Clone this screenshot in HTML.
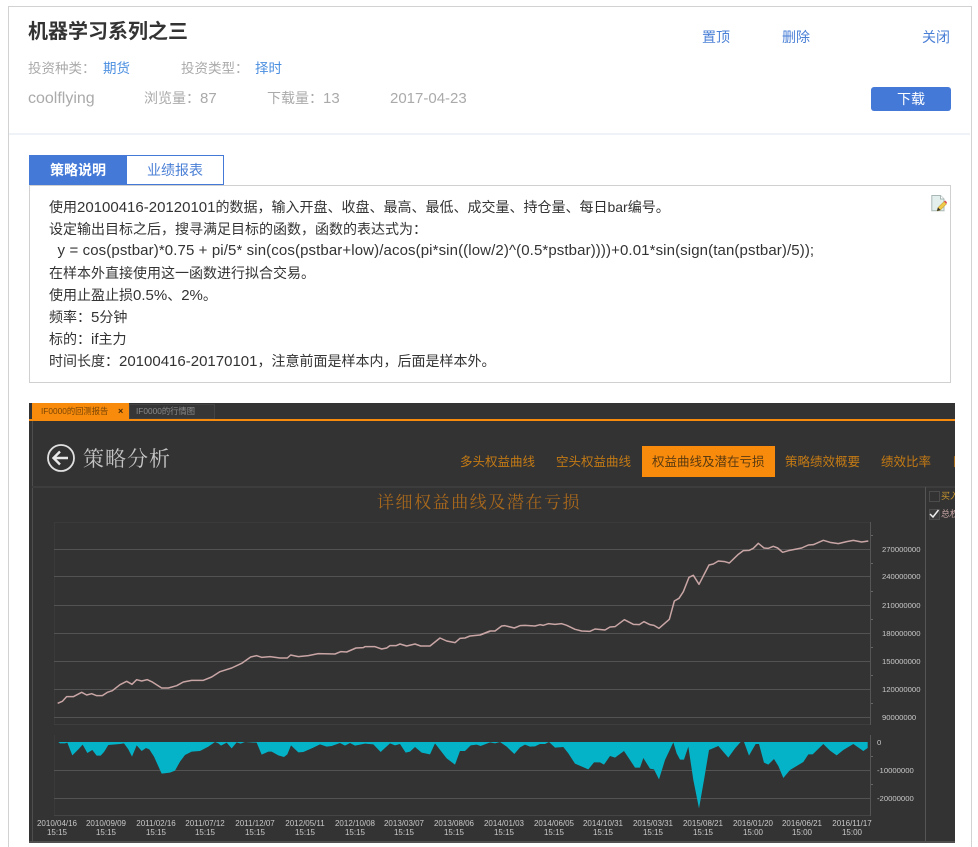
<!DOCTYPE html>
<html lang="zh"><head><meta charset="utf-8"><title>机器学习系列之三</title>
<style>
html,body{margin:0;padding:0;background:#fff;width:978px;height:847px;overflow:hidden}
#w{position:relative;width:978px;height:847px;overflow:hidden;font-family:"Liberation Sans","Noto Sans CJK SC",sans-serif}
.a{position:absolute;white-space:nowrap}
.blue{color:#4a7fd6}
.m{color:#aaa;font-size:14px;line-height:20px}
.c{position:absolute;left:49px;font-size:14px;line-height:22px;color:#333;white-space:pre}
.l{font-size:15px;line-height:0}
.p{font-family:"Noto Sans CJK TC",sans-serif;line-height:0}
#d{position:absolute;left:29px;top:403px;width:926px;height:440px;background:#333;overflow:hidden}
.ax{font-size:7.7px;color:#c8c8c8;position:absolute;white-space:nowrap;line-height:10px}
.dt{font-size:8px;color:#c8c8c8;position:absolute;width:60px;text-align:center;line-height:9px;top:819px}
.nv{font-size:12.5px;color:#c47a14;position:absolute;top:454px;line-height:16px;white-space:nowrap}
</style></head><body><div id="w">
<div class="a" style="left:8px;top:6px;width:962px;height:860px;border:1px solid #d2d2d2"></div>
<div class="a" style="left:9px;top:133px;width:961px;height:2px;background:#eff2f6"></div>

<div class="a" style="left:28px;top:18px;font-size:20px;font-weight:bold;color:#333;line-height:28px">机器学习系列之三</div>
<div class="a m" style="left:28px;top:59px;font-size:13.5px">投资种类<span class="p">：</span></div>
<div class="a" style="left:103px;top:59px;font-size:13.5px;line-height:20px;color:#4a8ee0">期货</div>
<div class="a m" style="left:181px;top:59px;font-size:13.5px">投资类型<span class="p">：</span></div>
<div class="a" style="left:255px;top:59px;font-size:13.5px;line-height:20px;color:#4a8ee0">择时</div>
<div class="a m" style="left:28px;top:89px;font-size:16px">coolflying</div>
<div class="a m" style="left:144px;top:88px">浏览量<span class="p">：</span><span class="l">87</span></div>
<div class="a m" style="left:267px;top:88px">下载量<span class="p">：</span><span class="l">13</span></div>
<div class="a m" style="left:390px;top:89px;font-size:15px">2017-04-23</div>

<div class="a blue" style="left:702px;top:27px;font-size:14px;line-height:20px">置顶</div>
<div class="a blue" style="left:782px;top:27px;font-size:14px;line-height:20px">删除</div>
<div class="a blue" style="left:922px;top:27px;font-size:14px;line-height:20px">关闭</div>
<div class="a" style="left:871px;top:87px;width:80px;height:24px;background:#4479d8;border-radius:3px;color:#fff;font-size:14px;line-height:24px;text-align:center">下载</div>

<div class="a" style="left:29px;top:155px;width:98px;height:30px;background:#4479d8;color:#fff;font-size:14px;line-height:30px;text-align:center;font-weight:bold">策略说明</div>
<div class="a" style="left:127px;top:155px;width:96px;height:28px;border:1px solid #4479d8;border-left:0;font-size:14px;line-height:29px;text-align:center;color:#4a7fd6">业绩报表</div>
<div class="a" style="left:29px;top:185px;width:920px;height:196px;border:1px solid #d0d0d0"></div>

<svg class="a" style="left:930px;top:194px" width="18" height="18" viewBox="0 0 18 18">
<path d="M1.800 1.500h8.700l3.500 3.500v11.800h-12.200z" fill="#e3efec" stroke="#a9b8b6"/>
<path d="M10.500 1.500v3.500h3.500" fill="#fff" stroke="#a9b8b6"/>
<path d="M7 17l1-3.500 6-6 2.500 2.500-6 6z" fill="#efc94c" stroke="#a88a20" stroke-width=".5"/>
<path d="M14 7.500l1.200-1 1.800 1.800-.6 1.700z" fill="#e0525a"/>
<path d="M7 17l1-3.500 2.500 2.500z" fill="#333"/>
</svg>

<div class="c" style="top:196px">使用<span class="l">20100416-20120101</span>的数据<span class="p">，</span>输入开盘<span class="p">、</span>收盘<span class="p">、</span>最高<span class="p">、</span>最低<span class="p">、</span>成交量<span class="p">、</span>持仓量<span class="p">、</span>每日<span class="l" style="font-size:14px">bar</span>编号<span class="p">。</span></div>
<div class="c" style="top:218px">设定输出目标之后<span class="p">，</span>搜寻满足目标的函数<span class="p">，</span>函数的表达式为<span class="p">：</span></div>
<div class="c" style="top:240px;font-size:15px;letter-spacing:.11px">  y = cos(pstbar)*0.75 + pi/5* sin(cos(pstbar+low)/acos(pi*sin((low/2)^(0.5*pstbar))))+0.01*sin(sign(tan(pstbar)/5));</div>
<div class="c" style="top:262px">在样本外直接使用这一函数进行拟合交易<span class="p">。</span></div>
<div class="c" style="top:284px">使用止盈止损<span class="l">0.5%</span><span class="p">、</span><span class="l">2%</span><span class="p">。</span></div>
<div class="c" style="top:306px">频率<span class="p">：</span><span class="l">5</span>分钟</div>
<div class="c" style="top:328px">标的<span class="p">：</span><span class="l">if</span>主力</div>
<div class="c" style="top:350px">时间长度<span class="p">：</span><span class="l">20100416-20170101</span><span class="p">，</span>注意前面是样本内<span class="p">，</span>后面是样本外<span class="p">。</span></div>

<div id="d"></div>
<svg class="a" style="left:29px;top:403px" width="926" height="440" viewBox="29 403 926 440">
<rect x="32" y="403" width="97" height="17" fill="#f88b0c"/>
<rect x="129.500" y="404.500" width="85" height="14.500" fill="#363636" stroke="#444"/>
<rect x="29" y="419" width="926" height="2" fill="#f88b0c"/>
<rect x="32" y="421" width="1" height="420" fill="#4e4e4e"/>
<rect x="32" y="486" width="923" height="2" fill="#3d3d3d"/>
<rect x="29" y="841" width="926" height="2" fill="#505050"/>
<rect x="925" y="487" width="1" height="354" fill="#555"/>
<rect x="54" y="522" width="816" height="1" fill="#3a3a3a"/>
<rect x="54" y="522" width="1" height="202" fill="#3a3a3a"/>
<rect x="54" y="735" width="1" height="81" fill="#3a3a3a"/>
<g fill="#535353">
<rect x="54" y="549" width="816" height="1"/><rect x="54" y="576" width="816" height="1"/><rect x="54" y="605" width="816" height="1"/><rect x="54" y="633" width="816" height="1"/><rect x="54" y="661" width="816" height="1"/><rect x="54" y="689" width="816" height="1"/><rect x="54" y="717" width="816" height="1"/>
<rect x="54" y="770" width="816" height="1"/><rect x="54" y="798" width="816" height="1"/>
</g>
<rect x="54" y="724" width="816" height="1" fill="#3e3e3e"/>
<rect x="54" y="815" width="816" height="1" fill="#454545"/>
<rect x="870" y="522" width="1" height="203" fill="#555"/>
<rect x="870" y="735" width="1" height="81" fill="#555"/>
<g fill="#666">
<rect x="871" y="535" width="2" height="1"/><rect x="871" y="563" width="2" height="1"/><rect x="871" y="591" width="2" height="1"/><rect x="871" y="619" width="2" height="1"/><rect x="871" y="647" width="2" height="1"/><rect x="871" y="675" width="2" height="1"/><rect x="871" y="703" width="2" height="1"/>
<rect x="871" y="756" width="2" height="1"/><rect x="871" y="784" width="2" height="1"/>
</g>
<g transform="translate(30 720) scale(.33333)" fill="#05b3c8">
<polygon points="85,66 90,70 105,70 112,68 127,106 145,88 158,74 172,99 187,90 200,107 212,107 222,96 235,75 270,72 282,70 295,88 306,110 320,76 335,93 348,84 358,88 372,110 395,161 420,158 435,152 450,125 465,105 485,95 510,93 535,80 555,66 565,70 573,77 590,68 605,85 620,67 632,71 645,66 680,68 695,104 715,95 725,95 745,106 762,111 772,103 783,76 805,97 820,96 850,83 870,73 890,80 905,78 930,69 945,77 960,69 975,77 1005,71 1030,73 1052,96 1080,70 1095,76 1110,72 1127,98 1140,95 1155,81 1175,98 1200,103 1215,70 1250,115 1275,134 1290,93 1305,93 1322,76 1340,74 1352,78 1380,67 1380,66"/>
</g>
<g transform="translate(480 720) scale(.33333)" fill="#05b3c8">
<polygon points="-1,66 0,77 15,71 30,67 45,70 60,66 80,80 103,102 120,82 135,74 150,80 165,79 180,72 195,72 207,66 225,83 250,81 265,100 285,131 325,148 342,127 360,127 372,134 390,108 405,113 432,93 450,120 465,143 480,143 490,114 510,146 522,148 537,178 555,120 580,67 590,100 600,119 612,119 625,80 640,180 657,265 672,180 687,90 715,78 745,113 765,85 782,66 792,66 807,107 827,72 837,72 852,128 865,134 882,117 895,138 910,174 930,150 970,126 985,103 998,103 1030,72 1050,92 1070,106 1090,90 1120,72 1150,93 1163,84 1163,66"/>
</g>
<g fill="none" stroke="#c9a5a5" stroke-width="4.500" stroke-linejoin="round">
<polyline transform="translate(30 540) scale(.33333)" points="83,490 97,484 110,470 130,470 155,457 170,465 185,461 200,467 217,467 232,457 247,452 270,434 290,424 306,433 320,419 335,423 352,419 365,425 395,444 415,444 440,437 460,426 485,421 520,421 545,411 570,395 605,384 635,370 662,351 680,347 695,352 720,350 750,354 772,354 782,345 805,350 835,347 865,341 915,342 932,335 950,336 978,324 1000,323 1005,320 1035,320 1055,327 1070,324 1080,317 1098,317 1110,312 1130,318 1155,312 1172,318 1200,318 1230,294 1250,303 1275,308 1290,295 1305,294 1320,288 1350,285 1380,274"/>
<polyline transform="translate(480 540) scale(.33333)" points="0,285 30,273 45,273 65,258 75,257 103,264 120,257 135,256 165,258 180,254 190,256 205,251 225,253 245,251 260,256 285,268 305,273 330,274 345,267 375,270 390,261 405,260 433,239 460,253 478,254 492,245 510,254 522,256 537,265 568,238 583,183 597,175 610,155 627,112 640,106 657,133 687,75 700,72 715,63 735,65 748,69 775,43 790,32 808,31 820,25 835,10 852,24 865,25 880,19 893,24 908,37 925,32 965,24 985,15 1000,14 1030,1 1050,7 1075,11 1100,5 1120,1 1145,6 1165,3"/>
</g>
<circle cx="61" cy="458" r="13" fill="none" stroke="#e0e0e0" stroke-width="1.800"/>
<path d="M68 458H54M60 451.500L53.500 458l6.500 6.500" fill="none" stroke="#e8e8e8" stroke-width="2.400"/>
<rect x="642" y="446" width="133" height="31" fill="#f88b0c"/>
<rect x="929.500" y="491.500" width="10" height="10" fill="none" stroke="#4c4c4c"/>
<rect x="929.500" y="509.500" width="10" height="10" fill="#3c3c3c" stroke="#4c4c4c"/>
<path d="M930 514l3 3 5.500-7" fill="none" stroke="#eee" stroke-width="1.500"/>
</svg>

<div class="a" style="left:41px;top:405px;font-size:8.3px;line-height:13px;color:#7a4505">IF0000的回测报告</div>
<div class="a" style="left:118px;top:405px;font-size:9px;line-height:13px;color:#4a2a05;font-weight:bold">×</div>
<div class="a" style="left:136px;top:405px;font-size:8.3px;line-height:13px;color:#8a8a8a">IF0000的行情图</div>
<div class="a" style="left:83px;top:445px;font-size:21px;line-height:26px;letter-spacing:1px;color:#c4c4c4;font-family:'Noto Serif CJK SC',serif">策略分析</div>
<div class="nv" style="left:460px">多头权益曲线</div>
<div class="nv" style="left:556px">空头权益曲线</div>
<div class="nv" style="left:652px;color:#5a3a10">权益曲线及潜在亏损</div>
<div class="nv" style="left:785px">策略绩效概要</div>
<div class="nv" style="left:881px">绩效比率</div>
<div class="nv" style="left:952px;width:3px;overflow:hidden">日</div>
<div class="a" style="left:377px;top:489px;font-size:17px;line-height:24px;letter-spacing:1.550px;color:#a8681c;font-family:'Noto Serif CJK SC',serif">详细权益曲线及潜在亏损</div>
<div class="a" style="left:941px;top:491px;width:14px;overflow:hidden;font-size:9px;line-height:11px;color:#c8962c">买入</div>
<div class="a" style="left:941px;top:509px;width:14px;overflow:hidden;font-size:9px;line-height:11px;color:#c9a5a5">总权</div>

<div class="ax" style="left:882px;top:545px">270000000</div>
<div class="ax" style="left:882px;top:572px">240000000</div>
<div class="ax" style="left:882px;top:601px">210000000</div>
<div class="ax" style="left:882px;top:629px">180000000</div>
<div class="ax" style="left:882px;top:657px">150000000</div>
<div class="ax" style="left:882px;top:685px">120000000</div>
<div class="ax" style="left:882px;top:713px">90000000</div>
<div class="ax" style="left:877px;top:738px">0</div>
<div class="ax" style="left:877px;top:766px">-10000000</div>
<div class="ax" style="left:877px;top:794px">-20000000</div>

<div class="dt" style="left:27px">2010/04/16<br>15:15</div>
<div class="dt" style="left:76px">2010/09/09<br>15:15</div>
<div class="dt" style="left:126px">2011/02/16<br>15:15</div>
<div class="dt" style="left:175px">2011/07/12<br>15:15</div>
<div class="dt" style="left:225px">2011/12/07<br>15:15</div>
<div class="dt" style="left:275px">2012/05/11<br>15:15</div>
<div class="dt" style="left:325px">2012/10/08<br>15:15</div>
<div class="dt" style="left:374px">2013/03/07<br>15:15</div>
<div class="dt" style="left:424px">2013/08/06<br>15:15</div>
<div class="dt" style="left:474px">2014/01/03<br>15:15</div>
<div class="dt" style="left:524px">2014/06/05<br>15:15</div>
<div class="dt" style="left:573px">2014/10/31<br>15:15</div>
<div class="dt" style="left:623px">2015/03/31<br>15:15</div>
<div class="dt" style="left:673px">2015/08/21<br>15:15</div>
<div class="dt" style="left:723px">2016/01/20<br>15:00</div>
<div class="dt" style="left:772px">2016/06/21<br>15:00</div>
<div class="dt" style="left:822px">2016/11/17<br>15:00</div>
</div></body></html>
